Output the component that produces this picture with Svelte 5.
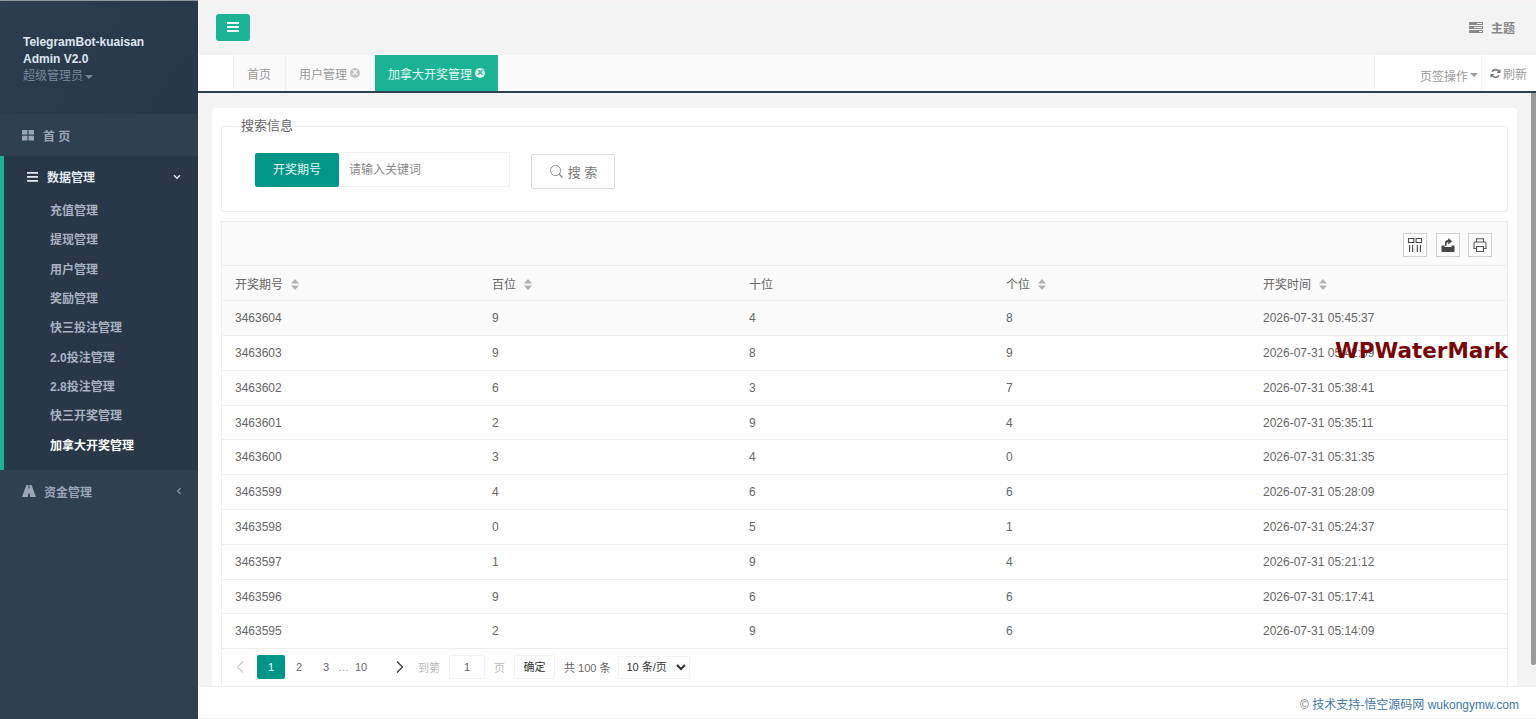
<script>
	const nav = ['充值管理', '提现管理', '用户管理', '奖励管理', '快三投注管理', '2.0投注管理', '2.8投注管理', '快三开奖管理', '加拿大开奖管理'];
	const columns = [
		{ label: '开奖期号', sort: true },
		{ label: '百位', sort: true },
		{ label: '十位', sort: false },
		{ label: '个位', sort: true },
		{ label: '开奖时间', sort: true }
	];
	const rows = [
		['3463604', 9, 4, 8, '2026-07-31 05:45:37'],
		['3463603', 9, 8, 9, '2026-07-31 05:42:09'],
		['3463602', 6, 3, 7, '2026-07-31 05:38:41'],
		['3463601', 2, 9, 4, '2026-07-31 05:35:11'],
		['3463600', 3, 4, 0, '2026-07-31 05:31:35'],
		['3463599', 4, 6, 6, '2026-07-31 05:28:09'],
		['3463598', 0, 5, 1, '2026-07-31 05:24:37'],
		['3463597', 1, 9, 4, '2026-07-31 05:21:12'],
		['3463596', 9, 6, 6, '2026-07-31 05:17:41'],
		['3463595', 2, 9, 6, '2026-07-31 05:14:09']
	];
</script>

<div class="shell">
	<aside class="side">
		<div class="profile">
			<div class="name">TelegramBot-kuaisan<br />Admin V2.0</div>
			<div class="role">超级管理员<span class="caret"></span></div>
		</div>
		<div class="top-item">
			<svg class="ico" viewBox="0 0 12 12" width="12" height="12"><path fill="currentColor" d="M0 1h5.4v4.6H0zM6.6 1H12v4.6H6.6zM0 6.8h5.4v4.6H0zM6.6 6.8H12v4.6H6.6z" /></svg>
			<span class="spaced">首 页</span>
		</div>
		<div class="group">
			<div class="group-head">
				<svg viewBox="0 0 11 10" width="11" height="10"><path fill="currentColor" d="M0 0h11v1.8H0zM0 4h11v1.8H0zM0 8h11v1.8H0z" /></svg>
				<span>数据管理</span>
				<svg class="chev" viewBox="0 0 8 6" width="8" height="6"><path d="M1 1.2 4 4.2 7 1.2" fill="none" stroke="currentColor" stroke-width="1.4" /></svg>
			</div>
			{#each nav as item, i}
				<div class="sub" class:current={i === nav.length - 1}>{item}</div>
			{/each}
		</div>
		<div class="top-item">
			<svg class="ico" viewBox="0 0 14 12" width="14" height="12"><path fill="currentColor" d="M4.4 0h2.1v3.4h1V0h2.1L14 12H8l-.3-3.6H6.3L6 12H0z" /></svg>
			<span>资金管理</span>
			<svg class="chev dim" viewBox="0 0 6 8" width="6" height="8"><path d="M4.6 1 1.6 4 4.6 7" fill="none" stroke="currentColor" stroke-width="1.2" /></svg>
		</div>
	</aside>

	<main class="main">
		<header class="topbar">
			<button class="menu-btn" aria-label="menu">
				<svg viewBox="0 0 12 10" width="12" height="10"><path fill="#fff" d="M0 0h12v2H0zM0 4h12v2H0zM0 8h12v2H0z" /></svg>
			</button>
			<div class="theme">
				<svg viewBox="0 0 14 11" width="14" height="11"><path fill="#8a8a8a" d="M0 0h14v3H0zM0 4h14v3H0zM0 8h14v3H0z" /><path fill="#f3f3f4" d="M8 1h5v1H8zM5 5h8v1H5zM10 9h3v1h-3z" /></svg>
				<span>主题</span>
			</div>
		</header>

		<nav class="tabs">
			<div class="tab-gap"></div>
			<div class="tab">首页</div>
			<div class="tab">用户管理<span class="close">×</span></div>
			<div class="tab active">加拿大开奖管理<span class="close">×</span></div>
			<div class="tab-fill"></div>
			<div class="tab-right ops">页签操作<span class="caret"></span></div>
			<div class="tab-right refresh">
				<svg viewBox="0 0 12 12" width="11" height="11"><path fill="none" stroke="#777" stroke-width="1.8" d="M10 4.4A4.3 4.3 0 0 0 2.3 4M2 7.6A4.3 4.3 0 0 0 9.7 8" /><path fill="#777" d="M11.5 1v4.4H7.1zM.5 11V6.6h4.4z" /></svg>
				刷新
			</div>
		</nav>

		<section class="content">
			<div class="card">
				<fieldset class="search">
					<legend>搜索信息</legend>
					<div class="search-row">
						<span class="label">开奖期号</span>
						<input class="keyword" placeholder="请输入关键词" />
						<button class="search-btn">
							<svg viewBox="0 0 16 16" width="15" height="15"><circle cx="7" cy="7" r="5.4" fill="none" stroke="#888" stroke-width="1" /><path d="M11 11l3.4 3.4" stroke="#888" stroke-width="1.4" /></svg>
							搜 索
						</button>
					</div>
				</fieldset>

				<div class="table-box">
					<div class="toolbar">
						<span class="tool">
							<svg viewBox="0 0 16 16" width="16" height="16"><path fill="none" stroke="#333" stroke-width="1.1" d="M1.5 1.5h5.4v4H1.5zM9.1 1.5h5.4v4H9.1zM2.6 8v7M5.6 8v7M10.3 8v7M13.4 8v7" /></svg>
						</span>
						<span class="tool">
							<svg viewBox="0 0 16 16" width="16" height="16"><path fill="#333" d="M1.5 8.5h3v1.6h7V8.5h3V15h-13z" /><path fill="#333" d="M5 9V5.5C5 4 6.2 3 8.2 3V1l4 3.2-4 3.2V5.2C7 5.2 6.4 6 6.4 9z" /></svg>
						</span>
						<span class="tool">
							<svg viewBox="0 0 16 16" width="16" height="16"><path fill="none" stroke="#444" stroke-width="1.1" d="M4.5 5V1.8h7V5M4.5 11.5H2V6.8C2 5.8 2.6 5 3.6 5h8.8c1 0 1.6.8 1.6 1.8v4.7h-2.5M4.5 9.5h7v5h-7z" /></svg>
						</span>
					</div>
					<table>
						<thead>
							<tr>
								{#each columns as col}
									<th>
										{col.label}
										{#if col.sort}
											<svg class="sort" viewBox="0 0 8 11" width="8" height="11"><path fill="#b2b2b2" d="M4 0l4 4.4H0zM4 11L0 6.6h8z" /></svg>
										{/if}
									</th>
								{/each}
							</tr>
						</thead>
						<tbody>
							{#each rows as row, i}
								<tr class:hover={i === 0}>
									{#each row as cell}
										<td>{cell}</td>
									{/each}
								</tr>
							{/each}
						</tbody>
					</table>
					<div class="pager">
						<svg class="arrow" viewBox="0 0 10 14" width="10" height="14"><path d="M8 1.5 2.5 7 8 12.5" fill="none" stroke="#ccc" stroke-width="1.2" /></svg>
						<span class="page on">1</span>
						<span class="page">2</span>
						<span class="page">3</span>
						<span class="dots">…</span>
						<span class="page last">10</span>
						<svg class="arrow next" viewBox="0 0 10 14" width="10" height="14"><path d="M2 1.5 7.5 7 2 12.5" fill="none" stroke="#333" stroke-width="1.2" /></svg>
						<span class="muted goto">到第</span>
						<span class="page-input">1</span>
						<span class="muted">页</span>
						<span class="confirm">确定</span>
						<span class="total">共 100 条</span>
						<select class="size">
							<option>10 条/页</option>
						</select>
					</div>
				</div>
			</div>
		</section>

		<footer class="foot">© <span>技术支持-悟空源码网 wukongymw.com</span></footer>

		<div class="thumb"></div>
		<div class="watermark">WPWaterMark</div>
	</main>
</div>

<style>
	:global(body) {
		margin: 0;
		overflow: hidden;
		background: #f3f3f4;
	}

	.shell {
		display: grid;
		grid-template-columns: 198px 1fr;
		height: 719px;
		font-family: "Liberation Sans", "Noto Sans CJK SC", sans-serif;
		font-size: 12px;
		color: #666;
	}

	/* ── Sidebar ── */
	.side {
		background: #2f4050;
		color: #a7b1c2;
		border-top: 1px solid #8f979e;
		box-sizing: border-box;
	}

	.profile {
		box-sizing: border-box;
		height: 113px;
		padding: 33px 0 0 23px;
		background: linear-gradient(125deg, #2c3e50 0%, #293a4b 45%, #26384a 100%);
	}

	.name {
		color: #dfe4ed;
		font-weight: 700;
		line-height: 17px;
	}

	.role {
		color: #74889b;
		line-height: 17px;
	}

	.caret {
		display: inline-block;
		margin-left: 2px;
		vertical-align: middle;
		border-top: 4px solid currentColor;
		border-left: 4px solid transparent;
		border-right: 4px solid transparent;
	}

	.top-item {
		display: flex;
		align-items: center;
		height: 42px;
		padding-left: 22px;
		background: #2f4050;
		font-weight: 700;
		color: #9aa6b6;
	}

	.ico {
		margin-right: 8px;
		flex: none;
	}

	.top-item .ico + span {
		flex: 1;
	}

	.spaced {
		padding-left: 1px;
	}

	.chev {
		margin-right: 17px;
	}

	.chev.dim {
		margin-right: 16px;
		color: #8594a5;
	}

	.group {
		box-sizing: border-box;
		height: 314px;
		background: #293846;
		border-left: 4px solid #1ab394;
		color: #a7b1c2;
		font-weight: 700;
	}

	.group-head {
		display: flex;
		align-items: center;
		height: 41px;
		padding-left: 23px;
		color: #e4e8ee;
	}

	.group-head span {
		flex: 1;
		margin-left: 9px;
	}

	.sub {
		height: 29.35px;
		line-height: 29.35px;
		padding-left: 46px;
	}

	.sub:first-of-type {
		margin-top: 0;
	}

	.sub.current {
		color: #fff;
	}

	/* ── Top bar + tabs ── */
	.main {
		position: relative;
		display: flex;
		flex-direction: column;
		min-width: 0;
		height: 719px;
	}

	.topbar {
		box-sizing: border-box;
		display: flex;
		align-items: center;
		justify-content: space-between;
		height: 55px;
		padding: 0 21px 2px 18px;
		background: #f3f3f4;
		border-top: 1px solid #f7eef0;
	}

	.menu-btn {
		display: flex;
		align-items: center;
		justify-content: center;
		width: 34px;
		height: 27px;
		padding: 0;
		border: 0;
		border-radius: 3px;
		background: #1ab394;
	}

	.theme {
		display: flex;
		align-items: center;
		gap: 8px;
		color: #888;
		font-weight: 700;
	}

	.tabs {
		box-sizing: border-box;
		display: flex;
		height: 38px;
		flex: none;
		background: #fafafa;
		border-bottom: 2px solid #2f4050;
		color: #999;
	}

	.tab-gap {
		width: 35px;
		background: #fff;
		border-right: 1px solid #eee;
	}

	.tab {
		display: flex;
		align-items: center;
		padding: 0 14px 0 13px;
		border-right: 1px solid #eee;
	}

	.tab.active {
		background: #1ab394;
		color: #e4f6f2;
		border-right: 0;
		padding: 0 13px;
	}

	.close {
		display: inline-flex;
		align-items: center;
		justify-content: center;
		width: 10px;
		height: 10px;
		margin-left: 3px;
		border-radius: 50%;
		background: #c2c2c2;
		color: #fafafa;
		font-size: 10px;
		font-weight: 700;
		line-height: 1;
	}

	.active .close {
		background: #d8f0ea;
		color: #1ab394;
	}

	.tab-fill {
		flex: 1;
	}

	.tab-right {
		display: flex;
		align-items: center;
		background: #fff;
	}

	.ops {
		box-sizing: border-box;
		width: 108px;
		padding: 4px 0 0 45px;
		border-left: 1px solid #eee;
		border-right: 1px solid #f5f5f5;
		white-space: nowrap;
	}

	.refresh {
		gap: 2px;
		width: 54px;
		box-sizing: border-box;
		padding-left: 8px;
		white-space: nowrap;
	}

	/* ── Card ── */
	.content {
		flex: 1;
		min-height: 0;
		box-sizing: border-box;
		padding: 15px 19px 0 14px;
	}

	.card {
		box-sizing: border-box;
		height: 579px;
		padding: 17px 9px 0;
		background: #fff;
		border-radius: 4px 4px 0 0;
	}

	.search {
		box-sizing: border-box;
		height: 87px;
		margin: 0;
		padding: 0 0 0 33px;
		border: 1px solid #eee;
		border-radius: 2px;
	}

	legend {
		margin-left: -14px;
		padding: 0 0 0 0;
		font-size: 13px;
		line-height: 2px;
		color: #666;
	}

	.search-row {
		display: flex;
		align-items: flex-start;
		margin-top: 25px;
	}

	.label {
		box-sizing: border-box;
		width: 84px;
		height: 34px;
		margin-top: 1px;
		border-radius: 2px;
		background: #009688;
		color: #e4f4f2;
		line-height: 34px;
		text-align: center;
	}

	.keyword {
		box-sizing: border-box;
		width: 171px;
		height: 35px;
		padding: 0 9px;
		border: 1px solid #f2f2f2;
		outline: 0;
		font: inherit;
	}

	.keyword::placeholder {
		color: #888;
	}

	.search-btn {
		display: flex;
		align-items: center;
		justify-content: center;
		gap: 4px;
		box-sizing: border-box;
		width: 84px;
		height: 35px;
		margin: 2px 0 0 21px;
		padding: 0;
		border: 1px solid #ddd;
		border-radius: 2px;
		background: #fff;
		color: #777;
		font: inherit;
		font-size: 13px;
	}

	.table-box {
		box-sizing: border-box;
		height: 466px;
		margin-top: 9px;
		border: 1px solid #eee;
		border-bottom-color: #f2f2f2;
	}

	.toolbar {
		box-sizing: border-box;
		display: flex;
		justify-content: flex-end;
		gap: 8.5px;
		height: 44px;
		padding: 11px 15px 0 0;
		background: #fafafa;
		border-bottom: 1px solid #eee;
	}

	.tool {
		box-sizing: border-box;
		display: flex;
		align-items: center;
		justify-content: center;
		width: 24px;
		height: 24px;
		border: 1px solid #ccc;
		background: #fff;
		opacity: 0.9;
	}

	table {
		width: 100%;
		border-collapse: collapse;
		table-layout: fixed;
	}

	th,
	td {
		box-sizing: border-box;
		height: 34.8px;
		padding: 0 13px;
		border-bottom: 1px solid #eee;
		text-align: left;
		font-weight: 400;
		color: #666;
	}

	thead tr,
	tr.hover {
		background: #fafafa;
	}

	.sort {
		margin-left: 5px;
		vertical-align: -1px;
	}

	.pager {
		display: flex;
		align-items: center;
		height: 36px;
		padding-left: 13px;
		font-size: 11px;
		color: #666;
	}

	.arrow {
		margin-right: 12px;
	}

	.arrow.next {
		margin: 0 13px 0 23px;
	}

	.page {
		box-sizing: border-box;
		width: 28px;
		height: 24px;
		line-height: 24px;
		text-align: center;
		margin-right: -1px;
	}

	.page.on {
		background: #009688;
		border-radius: 2px;
		color: #fff;
		margin-right: 0;
	}

	.dots {
		width: 10px;
		margin-left: -1px;
		color: #999;
	}

	.page.last {
		width: 24px;
		margin-left: 1px;
	}

	.muted {
		color: #bbb;
	}

	.goto {
		margin-right: 9px;
	}

	.page-input {
		box-sizing: border-box;
		width: 36px;
		height: 24px;
		margin-right: 9px;
		border: 1px solid #f2f2f2;
		border-radius: 2px;
		line-height: 22px;
		text-align: center;
	}

	.confirm {
		box-sizing: border-box;
		width: 41px;
		height: 24px;
		margin-left: 9px;
		border: 1px solid #f2f2f2;
		border-radius: 2px;
		line-height: 22px;
		text-align: center;
		color: #333;
	}

	.total {
		margin: 0 8px 0 9px;
	}

	.size {
		box-sizing: border-box;
		width: 72px;
		height: 23px;
		padding: 0 0 0 3px;
		border: 1px solid #f2f2f2;
		border-radius: 2px;
		background-color: #fff;
		font: inherit;
		color: #333;
	}

	/* ── Footer ── */
	.foot {
		box-sizing: border-box;
		flex: none;
		height: 33px;
		padding: 8px 17px 0 0;
		background: #fff;
		border-top: 1px solid #eee;
		border-bottom: 1px solid #eee;
		text-align: right;
		color: #777;
	}

	.foot span {
		color: #3e77a8;
	}

	/* ── Overlays ── */
	.thumb {
		position: absolute;
		top: 93px;
		right: 0;
		width: 5px;
		height: 572px;
		background: #9b9b9b;
		border-radius: 0 0 2px 2px;
	}

	.watermark {
		position: absolute;
		top: 336px;
		left: 1137px;
		font-family: "DejaVu Sans", sans-serif;
		font-size: 21.5px;
		font-weight: 700;
		line-height: 30px;
		color: #7a0505;
		white-space: nowrap;
	}
</style>
